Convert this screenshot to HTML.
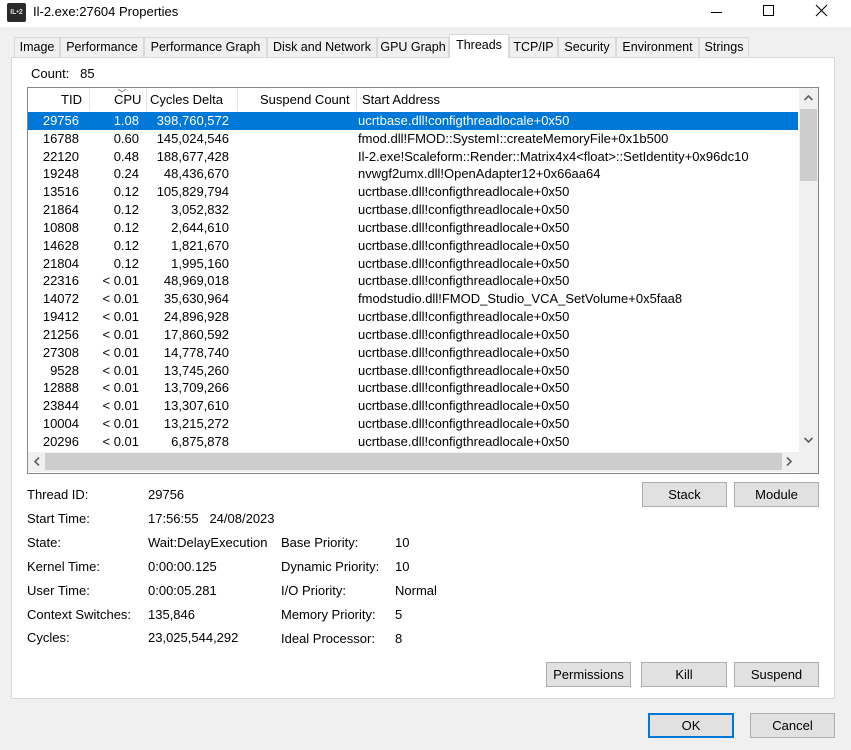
<!DOCTYPE html>
<html><head><meta charset="utf-8"><style>
*{box-sizing:border-box;margin:0;padding:0}
body{width:851px;height:750px;background:#f0f0f0;font-family:"Liberation Sans",sans-serif;font-size:13px;color:#000;position:relative;overflow:hidden}
.a{position:absolute;white-space:nowrap}
.title{left:0;top:0;width:851px;height:27px;background:#fff}
.tab{position:absolute;top:37px;height:20px;border:1px solid #d9d9d9;border-bottom:none;background:#f0f0f0;padding:2px 0 0 0;text-align:center;font-size:12.5px;white-space:nowrap}
.panel{left:11px;top:57px;width:824px;height:642px;background:#fff;border:1px solid #d9d9d9}
.list{left:27px;top:87px;width:792px;height:387px;border:1px solid #828790;background:#fff;overflow:hidden}
.hdr{position:absolute;top:0;height:23px;left:0;width:770px}
.hc{position:absolute;top:4px}
.dv{position:absolute;top:0;width:1px;height:23px;background:#e5e5e5}
.row{position:absolute;left:0;width:770px;height:18px}
.row span{position:absolute;top:1px}
.sel{background:#0078d7;color:#fff}
.btn{position:absolute;height:25px;background:#e1e1e1;border:1px solid #adadad;text-align:center;line-height:23px}
.lb{position:absolute;white-space:nowrap}
</style></head><body>
<div class="a title"></div>
<div class="a" style="left:7px;top:3px;width:19px;height:19px;background:#2a2a2a;border-radius:2px;color:#ddd;font-size:7px;line-height:19px;text-align:center;font-weight:bold">IL•2</div>
<div class="a" style="left:33px;top:4px;font-size:13px">Il-2.exe:27604 Properties</div>
<div class="a" style="left:711px;top:12px;width:11px;height:1px;background:#000"></div>
<div class="a" style="left:763px;top:5px;width:11px;height:11px;border:1px solid #000"></div>
<svg class="a" style="left:815px;top:4px" width="13" height="13"><path d="M1 1L12 12M12 1L1 12" stroke="#000" stroke-width="1.1"/></svg>

<div class="a panel"></div>
<div class="tab" style="left:14px;width:46px">Image</div>
<div class="tab" style="left:60px;width:84px">Performance</div>
<div class="tab" style="left:144px;width:123px">Performance Graph</div>
<div class="tab" style="left:267px;width:110px">Disk and Network</div>
<div class="tab" style="left:377px;width:72px">GPU Graph</div>
<div class="tab" style="left:449px;top:34px;height:24px;width:60px;background:#fff;padding-top:3px">Threads</div>
<div class="tab" style="left:509px;width:49px">TCP/IP</div>
<div class="tab" style="left:558px;width:58px">Security</div>
<div class="tab" style="left:616px;width:83px">Environment</div>
<div class="tab" style="left:699px;width:50px">Strings</div>

<div class="a" style="left:31px;top:66px">Count:&nbsp;&nbsp; 85</div>

<div class="a list">
<div class="hdr">
<span class="hc" style="right:716px">TID</span>
<div class="dv" style="left:61px"></div>
<span class="hc" style="left:86px">CPU</span>
<svg class="a" style="left:89px;top:0" width="10" height="5"><path d="M1 1L5 4L9 1" stroke="#888" fill="none"/></svg>
<div class="dv" style="left:118px"></div>
<span class="hc" style="left:122px">Cycles Delta</span>
<div class="dv" style="left:209px"></div>
<span class="hc" style="left:232px">Suspend Count</span>
<div class="dv" style="left:328px"></div>
<span class="hc" style="left:334px">Start Address</span>
</div>
<div id="rows"></div>
<div class="a" style="left:771px;top:0;width:19px;height:364px;background:#f0f0f0"></div>
<div class="a" style="left:772px;top:21px;width:17px;height:72px;background:#cdcdcd"></div>
<svg class="a" style="left:775px;top:6px" width="11" height="8"><path d="M1.5 6L5.5 2L9.5 6" stroke="#606060" stroke-width="1.6" fill="none"/></svg>
<svg class="a" style="left:775px;top:348px" width="11" height="8"><path d="M1.5 2L5.5 6L9.5 2" stroke="#606060" stroke-width="1.6" fill="none"/></svg>
<div class="a" style="left:0;top:364px;width:771px;height:20px;background:#f0f0f0"></div>
<div class="a" style="left:17px;top:365px;width:737px;height:17px;background:#cdcdcd"></div>
<svg class="a" style="left:5px;top:368px" width="8" height="11"><path d="M6 1.5L2 5.5L6 9.5" stroke="#606060" stroke-width="1.6" fill="none"/></svg>
<svg class="a" style="left:757px;top:368px" width="8" height="11"><path d="M2 1.5L6 5.5L2 9.5" stroke="#606060" stroke-width="1.6" fill="none"/></svg>
<div class="a" style="left:771px;top:364px;width:19px;height:21px;background:#f0f0f0"></div>
</div>

<div class="lb" style="left:27px;top:487px">Thread ID:</div><div class="lb" style="left:148px;top:487px">29756</div>
<div class="lb" style="left:27px;top:511px">Start Time:</div><div class="lb" style="left:148px;top:511px">17:56:55&nbsp;&nbsp; 24/08/2023</div>
<div class="lb" style="left:27px;top:535px">State:</div><div class="lb" style="left:148px;top:535px">Wait:DelayExecution</div>
<div class="lb" style="left:27px;top:559px">Kernel Time:</div><div class="lb" style="left:148px;top:559px">0:00:00.125</div>
<div class="lb" style="left:27px;top:583px">User Time:</div><div class="lb" style="left:148px;top:583px">0:00:05.281</div>
<div class="lb" style="left:27px;top:607px">Context Switches:</div><div class="lb" style="left:148px;top:607px">135,846</div>
<div class="lb" style="left:27px;top:630px">Cycles:</div><div class="lb" style="left:148px;top:630px">23,025,544,292</div>
<div class="lb" style="left:281px;top:535px">Base Priority:</div><div class="lb" style="left:395px;top:535px">10</div>
<div class="lb" style="left:281px;top:559px">Dynamic Priority:</div><div class="lb" style="left:395px;top:559px">10</div>
<div class="lb" style="left:281px;top:583px">I/O Priority:</div><div class="lb" style="left:395px;top:583px">Normal</div>
<div class="lb" style="left:281px;top:607px">Memory Priority:</div><div class="lb" style="left:395px;top:607px">5</div>
<div class="lb" style="left:281px;top:631px">Ideal Processor:</div><div class="lb" style="left:395px;top:631px">8</div>

<div class="btn" style="left:642px;top:482px;width:85px">Stack</div>
<div class="btn" style="left:734px;top:482px;width:85px">Module</div>
<div class="btn" style="left:546px;top:662px;width:85px">Permissions</div>
<div class="btn" style="left:641px;top:662px;width:86px">Kill</div>
<div class="btn" style="left:734px;top:662px;width:85px">Suspend</div>
<div class="btn" style="left:648px;top:713px;width:86px;border:2px solid #0078d7;line-height:21px">OK</div>
<div class="btn" style="left:750px;top:713px;width:85px">Cancel</div>

<script>
var d=[["29756","1.08","398,760,572","ucrtbase.dll!configthreadlocale+0x50"],
["16788","0.60","145,024,546","fmod.dll!FMOD::SystemI::createMemoryFile+0x1b500"],
["22120","0.48","188,677,428","Il-2.exe!Scaleform::Render::Matrix4x4<float>::SetIdentity+0x96dc10"],
["19248","0.24","48,436,670","nvwgf2umx.dll!OpenAdapter12+0x66aa64"],
["13516","0.12","105,829,794","ucrtbase.dll!configthreadlocale+0x50"],
["21864","0.12","3,052,832","ucrtbase.dll!configthreadlocale+0x50"],
["10808","0.12","2,644,610","ucrtbase.dll!configthreadlocale+0x50"],
["14628","0.12","1,821,670","ucrtbase.dll!configthreadlocale+0x50"],
["21804","0.12","1,995,160","ucrtbase.dll!configthreadlocale+0x50"],
["22316","< 0.01","48,969,018","ucrtbase.dll!configthreadlocale+0x50"],
["14072","< 0.01","35,630,964","fmodstudio.dll!FMOD_Studio_VCA_SetVolume+0x5faa8"],
["19412","< 0.01","24,896,928","ucrtbase.dll!configthreadlocale+0x50"],
["21256","< 0.01","17,860,592","ucrtbase.dll!configthreadlocale+0x50"],
["27308","< 0.01","14,778,740","ucrtbase.dll!configthreadlocale+0x50"],
["9528","< 0.01","13,745,260","ucrtbase.dll!configthreadlocale+0x50"],
["12888","< 0.01","13,709,266","ucrtbase.dll!configthreadlocale+0x50"],
["23844","< 0.01","13,307,610","ucrtbase.dll!configthreadlocale+0x50"],
["10004","< 0.01","13,215,272","ucrtbase.dll!configthreadlocale+0x50"],
["20296","< 0.01","6,875,878","ucrtbase.dll!configthreadlocale+0x50"]];
var h="";d.forEach(function(r,i){var t=24+i*17.83;
h+='<div class="row'+(i==0?' sel':'')+'" style="top:'+t+'px"><span style="right:719px">'+r[0]+'</span><span style="right:659px">'+r[1]+'</span><span style="right:569px">'+r[2]+'</span><span style="left:330px">'+r[3].replace(/</g,'&lt;').replace(/>/g,'&gt;')+'</span></div>';});
document.getElementById('rows').innerHTML=h;
</script>
</body></html>
